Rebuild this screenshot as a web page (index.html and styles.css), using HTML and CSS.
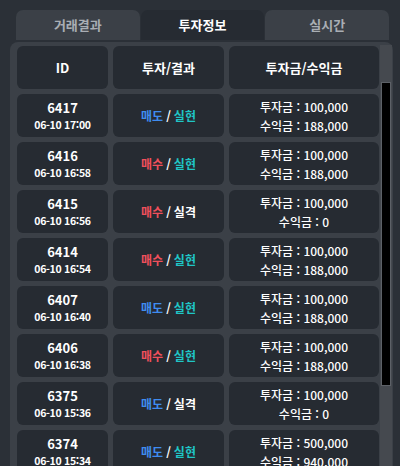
FILE: index.html
```html
<!DOCTYPE html>
<html lang="ko">
<head>
    <meta charset="UTF-8">
    <title>투자정보</title>
    <meta name="viewport" content="width=device-width, initial-scale=1.0">
    <link rel="stylesheet" href="styles.css">
</head>
<body>
    <div class="tabs">
        <div class="tab">거래결과</div>
        <div class="tab active">투자정보</div>
        <div class="tab">실시간</div>
    </div>

    <div class="panel">
        <div class="grid">
            <div class="cell head">ID</div>
            <div class="cell head">투자/결과</div>
            <div class="cell head">투자금/수익금</div>

            <div class="cell id"><span class="num">6417</span><span class="date">06-10 17:00</span></div>
            <div class="cell"><span class="sell">매도</span><span class="sep">/</span><span class="win">실현</span></div>
            <div class="cell money"><span>투자금 : 100,000</span><span>수익금 : 188,000</span></div>

            <div class="cell id"><span class="num">6416</span><span class="date">06-10 16:58</span></div>
            <div class="cell"><span class="buy">매수</span><span class="sep">/</span><span class="win">실현</span></div>
            <div class="cell money"><span>투자금 : 100,000</span><span>수익금 : 188,000</span></div>

            <div class="cell id"><span class="num">6415</span><span class="date">06-10 16:56</span></div>
            <div class="cell"><span class="buy">매수</span><span class="sep">/</span><span class="lose">실격</span></div>
            <div class="cell money"><span>투자금 : 100,000</span><span>수익금 : 0</span></div>

            <div class="cell id"><span class="num">6414</span><span class="date">06-10 16:54</span></div>
            <div class="cell"><span class="buy">매수</span><span class="sep">/</span><span class="win">실현</span></div>
            <div class="cell money"><span>투자금 : 100,000</span><span>수익금 : 188,000</span></div>

            <div class="cell id"><span class="num">6407</span><span class="date">06-10 16:40</span></div>
            <div class="cell"><span class="sell">매도</span><span class="sep">/</span><span class="win">실현</span></div>
            <div class="cell money"><span>투자금 : 100,000</span><span>수익금 : 188,000</span></div>

            <div class="cell id"><span class="num">6406</span><span class="date">06-10 16:38</span></div>
            <div class="cell"><span class="buy">매수</span><span class="sep">/</span><span class="win">실현</span></div>
            <div class="cell money"><span>투자금 : 100,000</span><span>수익금 : 188,000</span></div>

            <div class="cell id"><span class="num">6375</span><span class="date">06-10 15:36</span></div>
            <div class="cell"><span class="sell">매도</span><span class="sep">/</span><span class="lose">실격</span></div>
            <div class="cell money"><span>투자금 : 100,000</span><span>수익금 : 0</span></div>

            <div class="cell id"><span class="num">6374</span><span class="date">06-10 15:34</span></div>
            <div class="cell"><span class="sell">매도</span><span class="sep">/</span><span class="win">실현</span></div>
            <div class="cell money"><span>투자금 : 500,000</span><span>수익금 : 940,000</span></div>
        </div>

        <div class="scrollbar">
            <div class="thumb"></div>
        </div>
    </div>
</body>
</html>
```

FILE: styles.css
```css
body {
    background-color: #2b3037;
    color: white;
    font-family: "Noto Sans CJK KR", "Noto Sans", sans-serif;
    margin: 0;
    height: 466px;
    overflow: hidden;
}

.tabs {
    display: flex;
    gap: 1px;
    padding: 10px 11px 0 16px;
}

.tab {
    width: 124px;
    height: 30px;
    line-height: 30px;
    text-align: center;
    background: #3b4047;
    color: #a9aeb4;
    font-size: 13px;
    font-weight: bold;
    border-radius: 7px 7px 0 0;
}

.tab.active {
    background: #262b32;
    color: white;
}

.panel {
    display: flex;
    align-items: flex-start;
    margin: 2px 7px 0 10px;
    padding: 4px 0 0 7px;
    background: #3b4047;
    border-radius: 8px 8px 0 0;
    height: 440px;
}

.grid {
    display: grid;
    grid-template-columns: 91px 111px 150px;
    grid-auto-rows: 43px;
    column-gap: 5px;
    row-gap: 5px;
}

.cell {
    background: #262b32;
    border-radius: 6px;
    display: flex;
    align-items: center;
    justify-content: center;
    font-size: 12px;
    font-weight: bold;
}

.cell.head {
    font-size: 13px;
}

.cell.id,
.cell.money {
    flex-direction: column;
}

.num {
    font-size: 13px;
    line-height: 19px;
}

.date {
    font-size: 10.5px;
    line-height: 16px;
    letter-spacing: -0.3px;
}

.money span {
    font-size: 12px;
    line-height: 19px;
    font-weight: 500;
}

.sep {
    margin: 0 3px;
}

.sell {
    color: #3f8cf0;
}

.buy {
    color: #f0505c;
}

.win {
    color: #1fc6c6;
}

.lose {
    color: white;
}

.scrollbar {
    width: 12px;
    margin-left: 1px;
    margin-top: -1px;
    height: 440px;
    background: #45494f;
}

.thumb {
    width: 8px;
    height: 302px;
    margin: 37px 0 0 1px;
    background: #000;
    border: 1px solid #5d6167;
}
```
